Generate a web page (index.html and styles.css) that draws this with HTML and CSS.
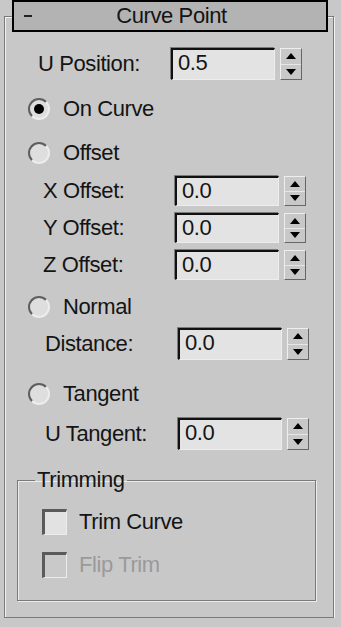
FILE: index.html
```html
<!DOCTYPE html>
<html lang="en">
<head>
  <meta charset="UTF-8">
  <meta name="viewport" content="width=device-width, initial-scale=1.0">
  <title>Curve Point</title>
  <link rel="stylesheet" href="styles.css">
</head>
<body>
  <div class="rollout">
    <div class="rollout-header">
      <span class="toggle"></span>
      <span class="title">Curve Point</span>
    </div>

    <div class="rollout-body">
      <div class="spin-row pos-row">
        <span class="spin-label">U Position:</span>
        <div class="spin-field">0.5</div>
        <div class="spin-btn"><span class="up"></span><span class="down"></span></div>
      </div>

      <div class="radio-row on-curve">
        <span class="radio checked"></span>
        <span class="radio-label">On Curve</span>
      </div>

      <div class="radio-row offset">
        <span class="radio"></span>
        <span class="radio-label">Offset</span>
      </div>

      <div class="spin-row sub-row x-row">
        <span class="spin-label">X Offset:</span>
        <div class="spin-field">0.0</div>
        <div class="spin-btn"><span class="up"></span><span class="down"></span></div>
      </div>
      <div class="spin-row sub-row next-row">
        <span class="spin-label">Y Offset:</span>
        <div class="spin-field">0.0</div>
        <div class="spin-btn"><span class="up"></span><span class="down"></span></div>
      </div>
      <div class="spin-row sub-row next-row">
        <span class="spin-label">Z Offset:</span>
        <div class="spin-field">0.0</div>
        <div class="spin-btn"><span class="up"></span><span class="down"></span></div>
      </div>

      <div class="radio-row normal">
        <span class="radio"></span>
        <span class="radio-label">Normal</span>
      </div>

      <div class="spin-row wide-row distance-row">
        <span class="spin-label">Distance:</span>
        <div class="spin-field">0.0</div>
        <div class="spin-btn"><span class="up"></span><span class="down"></span></div>
      </div>

      <div class="radio-row tangent">
        <span class="radio"></span>
        <span class="radio-label">Tangent</span>
      </div>

      <div class="spin-row wide-row tangent-row">
        <span class="spin-label">U Tangent:</span>
        <div class="spin-field">0.0</div>
        <div class="spin-btn"><span class="up"></span><span class="down"></span></div>
      </div>

      <fieldset class="group">
        <legend>Trimming</legend>
        <div class="check-row">
          <span class="checkbox"></span>
          <span class="check-label">Trim Curve</span>
        </div>
        <div class="check-row disabled">
          <span class="checkbox"></span>
          <span class="check-label">Flip Trim</span>
        </div>
      </fieldset>
    </div>
  </div>
</body>
</html>
```

FILE: styles.css
```css
* {
  margin: 0;
  padding: 0;
  box-sizing: border-box;
}

body {
  font-family: 'Liberation Sans', Arial, sans-serif;
  font-size: 22px;
  letter-spacing: -0.4px;
  background-color: #c8c8c8;
  color: #141414;
  overflow: hidden;
}

/* outer etched frame of the rollout */
.rollout {
  margin: 16px 0 0 4px;
  width: 330px;
  border: 1px solid #7a7a7a;
  box-shadow: inset 1px 1px 0 #f2f2f2, 1px 1px 0 #f2f2f2;
}

.rollout-header {
  position: relative;
  margin: -17px 0 0 7px;
  width: 316px;
  height: 32px;
  border: 2px solid #000;
  background-color: #b3b3b3;
  display: flex;
  align-items: center;
  justify-content: center;
}

.rollout-header .toggle {
  position: absolute;
  left: 10px;
  top: 13px;
  width: 8px;
  height: 2px;
  background-color: #222;
}

.rollout-header .title {
  line-height: 24px;
  margin-left: 3px;
}

.rollout-body {
  padding-bottom: 16px;
}

/* spinner rows */
.spin-row {
  display: flex;
  align-items: center;
  height: 30px;
}

.spin-label {
  flex-shrink: 0;
  width: 133px;
  line-height: 24px;
}

.spin-field {
  width: 104px;
  height: 100%;
  background-color: #e3e3e3;
  border-style: solid;
  border-width: 2px 1px 1px 2px;
  border-color: #111 #ededed #ededed #111;
  box-shadow: -1px -1px 0 #7c7c7c;
  padding-left: 5px;
  line-height: 26px;
}

.spin-btn {
  margin-left: 5px;
  width: 22px;
  height: 100%;
  border: 1px solid;
  border-color: #eeeeee #666 #666 #eeeeee;
  display: flex;
  flex-direction: column;
}

.spin-btn span {
  flex: 1;
  display: flex;
  align-items: center;
  justify-content: center;
}

.spin-btn .up {
  border-bottom: 1px solid #e6e6e6;
}

.spin-btn .up::before,
.spin-btn .down::before {
  content: "";
  border-left: 5px solid transparent;
  border-right: 5px solid transparent;
}

.spin-btn .up::before {
  border-bottom: 6px solid #000;
}

.spin-btn .down::before {
  border-top: 6px solid #000;
}

.pos-row {
  margin-top: 16px;
  height: 32px;
  padding-left: 33px;
}

.sub-row {
  padding-left: 38px;
}

.sub-row .spin-label {
  width: 132px;
}

.x-row {
  margin-top: 11px;
}

.next-row {
  margin-top: 7px;
}

.wide-row {
  height: 32px;
  padding-left: 40px;
}

.distance-row {
  margin-top: 9px;
}

.tangent-row {
  margin-top: 12px;
}

/* radio buttons */
.radio-row {
  display: flex;
  align-items: center;
  height: 24px;
  padding-left: 23px;
}

.radio {
  width: 22px;
  height: 22px;
  border-radius: 50%;
  border: 2px solid;
  border-color: #5e5e5e #ececec #ececec #5e5e5e;
  background-color: #dedede;
  display: flex;
  align-items: center;
  justify-content: center;
}

.radio.checked::before {
  content: "";
  width: 10px;
  height: 10px;
  border-radius: 50%;
  background-color: #000;
}

.radio-label {
  margin-left: 13px;
  line-height: 24px;
}

.on-curve {
  margin-top: 17px;
}

.offset {
  margin-top: 20px;
}

.normal {
  margin-top: 15px;
}

.tangent {
  margin-top: 22px;
}

/* trimming group */
.group {
  margin: 18px 0 0 12px;
  width: 299px;
  min-width: 0;
  border: 1px solid #7a7a7a;
  box-shadow: inset 1px 1px 0 #ececec, 1px 1px 0 #ececec;
  padding: 0 0 22px 0;
}

.group legend {
  margin-left: 17px;
  padding: 0 2px;
  line-height: 24px;
}

.check-row {
  display: flex;
  align-items: center;
  height: 26px;
  margin-top: 17px;
  padding-left: 24px;
}

.checkbox {
  width: 25px;
  height: 26px;
  border-style: solid;
  border-width: 3px 1px 1px 3px;
  border-color: #5a5a5a #ececec #ececec #5a5a5a;
  background-color: #e2e2e2;
}

.check-label {
  margin-left: 12px;
  line-height: 24px;
}

.check-row.disabled .checkbox {
  background-color: #c9c9c9;
}

.check-row.disabled .check-label {
  color: #9a9a9a;
}
```
